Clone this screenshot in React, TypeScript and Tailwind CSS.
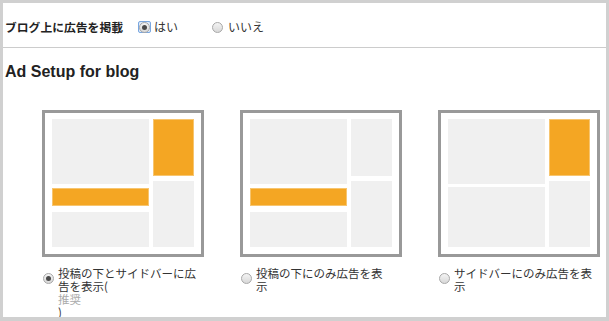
import React from "react";

const jp = { fontFamily: '"Noto Sans CJK JP", "Noto Sans", sans-serif' };

function Radio({ checked, focused }: { checked?: boolean; focused?: boolean }) {
  const circle = (
    <span className="flex h-[11px] w-[11px] items-center justify-center rounded-full border border-[#a8a8a8] bg-gradient-to-b from-[#f4f4f4] to-[#d8d8d8]">
      {checked && <span className="h-[5px] w-[5px] rounded-full bg-[#4a4a4a]" />}
    </span>
  );
  if (focused) {
    return (
      <span className="flex h-[12px] w-[13px] items-center justify-center rounded-[2px] border border-[#7aa7e0] bg-[#dce9f9]">
        {circle}
      </span>
    );
  }
  return <span className="flex h-[12px] w-[12px] items-center justify-center">{circle}</span>;
}

const Gray = ({ h }: { h: string }) => <div className={`${h} bg-[#f0f0f0]`} />;
const Orange = ({ h }: { h: string }) => (
  <div className={`${h} border border-[#f7c56f] bg-[#f4a623]`} />
);

function Box({ children }: { children: React.ReactNode }) {
  return (
    <div className="box-border flex h-[147px] w-[162px] gap-[4px] border-[3px] border-[#999999] bg-white pb-[7px] pl-[7px] pr-[7px] pt-[6px]">
      {children}
    </div>
  );
}

function Label({ checked, children }: { checked?: boolean; children: React.ReactNode }) {
  return (
    <div className="mt-[10px] flex items-start gap-[4px]" style={jp}>
      <span className="mt-[5px]">
        <Radio checked={checked} />
      </span>
      <div className="whitespace-nowrap text-[11.5px] leading-[13px] text-[#333]">{children}</div>
    </div>
  );
}

export default function App() {
  return (
    <div className="box-border h-[321px] w-[609px] overflow-hidden bg-[#d0d0d0] pb-[4px] pl-[3px] pr-[3px] pt-[3px]">
      <div className="h-full overflow-hidden bg-white">
        <div className="flex h-[45px] items-center border-b border-[#cccccc] pl-[2px] pt-[4px]" style={jp}>
          <span className="text-[11.8px] font-bold text-[#222]">ブログ上に広告を掲載</span>
          <span className="ml-[15px] flex items-center gap-[3px]">
            <Radio checked focused />
            <span className="text-[12px] text-[#333]">はい</span>
          </span>
          <span className="ml-[33px] flex items-center gap-[5px]">
            <Radio />
            <span className="text-[12px] text-[#333]">いいえ</span>
          </span>
        </div>
        <h2
          className="pl-[2px] pt-[15px] text-[16px] font-bold leading-[18px] text-[#222]"
          style={{ fontFamily: '"Liberation Sans", Arial, sans-serif' }}
        >
          Ad Setup for blog
        </h2>
        <div className="ml-[39px] mt-[29px] flex gap-[36px]">
          <div className="w-[162px]">
            <Box>
              <div className="flex w-[97px] flex-col">
                <Gray h="h-[65px]" />
                <div className="mt-[4px]">
                  <Orange h="h-[18px]" />
                </div>
                <div className="mt-[6px]">
                  <Gray h="h-[35px]" />
                </div>
              </div>
              <div className="flex w-[41px] flex-col gap-[5px]">
                <Orange h="h-[57px]" />
                <Gray h="h-[66px]" />
              </div>
            </Box>
            <Label checked>
              投稿の下とサイドバーに広
              <br />
              告を表示(
              <br />
              <span className="text-[#aaaaaa]">推奨</span>
              <br />)
            </Label>
          </div>
          <div className="w-[162px]">
            <Box>
              <div className="flex w-[97px] flex-col">
                <Gray h="h-[65px]" />
                <div className="mt-[4px]">
                  <Orange h="h-[18px]" />
                </div>
                <div className="mt-[6px]">
                  <Gray h="h-[35px]" />
                </div>
              </div>
              <div className="flex w-[41px] flex-col gap-[5px]">
                <Gray h="h-[57px]" />
                <Gray h="h-[66px]" />
              </div>
            </Box>
            <Label>
              投稿の下にのみ広告を表
              <br />示
            </Label>
          </div>
          <div className="w-[162px]">
            <Box>
              <div className="flex w-[97px] flex-col gap-[3px]">
                <Gray h="h-[65px]" />
                <Gray h="h-[60px]" />
              </div>
              <div className="flex w-[41px] flex-col gap-[5px]">
                <Orange h="h-[57px]" />
                <Gray h="h-[66px]" />
              </div>
            </Box>
            <Label>
              サイドバーにのみ広告を表
              <br />示
            </Label>
          </div>
        </div>
      </div>
    </div>
  );
}
